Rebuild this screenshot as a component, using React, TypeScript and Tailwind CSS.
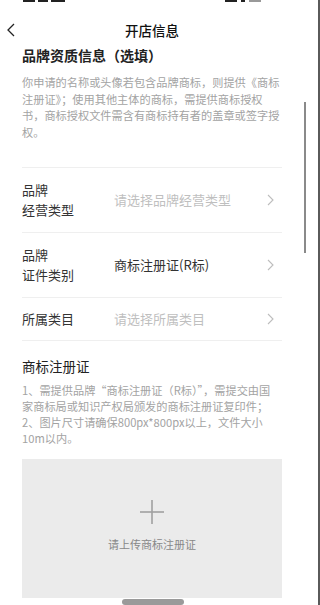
import type React from "react"

const font = { fontFamily: '"Noto Sans CJK SC", "Noto Sans", sans-serif' }

const Chevron: React.FC = () => (
    <svg width="7" height="12" viewBox="0 0 7 12" fill="none" className="shrink-0">
        <polyline points="1,1 6,6 1,11" stroke="#bdbdbd" strokeWidth="1.1" />
    </svg>
)

interface RowProps {
    label: string[]
    value: string
    placeholder?: boolean
}

const FormRow: React.FC<RowProps> = ({ label, value, placeholder }) => (
    <div className={`flex items-center border-b border-[#efefef] ${label.length > 1 ? "py-3" : "py-[11px]"}`}>
        <div className="w-[92px] text-[13px] leading-[20px] text-[#333]">
            {label.map((l) => (
                <div key={l}>{l}</div>
            ))}
        </div>
        <div className={`flex-1 text-[13px] leading-[20px] ${placeholder ? "text-[#bfbfbf]" : "text-[#333]"}`}>{value}</div>
        <div className="pr-[8px]">
            <Chevron />
        </div>
    </div>
)

export default function App() {
    return (
        <div className="flex w-[320px] h-[605px] overflow-hidden bg-white" style={font}>
            {/* Main page */}
            <div className="w-[304px] shrink-0 flex flex-col">
                {/* status bar (cut off) */}
                <div className="h-[23px] flex items-start justify-between px-[23px]">
                    <div className="flex gap-[3px]">
                        <div className="w-[12px] h-[2px] bg-[#222]"></div>
                        <div className="w-[10px] h-[2px] bg-[#222]"></div>
                        <div className="w-[14px] h-[2px] bg-[#222]"></div>
                    </div>
                    <div className="flex gap-[4px] mr-[20px]">
                        <div className="w-[12px] h-[2px] bg-[#222]"></div>
                        <div className="w-[4px] h-[2px] bg-[#222]"></div>
                        <div className="w-[12px] h-[2px] bg-[#999]"></div>
                    </div>
                </div>

                {/* header */}
                <div className="h-[24px] flex items-center">
                    <svg width="10" height="14" viewBox="0 0 10 14" fill="none" className="ml-[6px]">
                        <polyline points="8,1 2,7 8,13" stroke="#222" strokeWidth="1.3" />
                    </svg>
                    <div className="flex-1 text-center text-[13.5px] font-medium text-[#111] mr-[16px]">开店信息</div>
                </div>

                <div className="px-[22px] flex flex-col">
                    <div className="mt-[5px] text-[14px] leading-[20px] font-bold text-[#222]">品牌资质信息（选填）</div>
                    <div className="mt-[9px] text-[11.2px] leading-[16.5px] text-[#a3a3a3] whitespace-nowrap">
                        <div>你申请的名称或头像若包含品牌商标，则提供《商标</div>
                        <div>注册证》；使用其他主体的商标，需提供商标授权</div>
                        <div>书，商标授权文件需含有商标持有者的盖章或签字授</div>
                        <div>权。</div>
                    </div>

                    <div className="mt-[27px] border-t border-[#efefef]">
                        <FormRow label={["品牌", "经营类型"]} value="请选择品牌经营类型" placeholder />
                        <FormRow label={["品牌", "证件类别"]} value="商标注册证(R标)" />
                        <FormRow label={["所属类目"]} value="请选择所属类目" placeholder />
                    </div>

                    <div className="mt-[15px] text-[13.5px] leading-[20px] text-[#222]">商标注册证</div>
                    <div className="mt-[6px] text-[11.2px] leading-[16px] text-[#a3a3a3] whitespace-nowrap">
                        <div>1、需提供品牌“商标注册证（R标）”，需提交由国</div>
                        <div>家商标局或知识产权局颁发的商标注册证复印件；</div>
                        <div>2、图片尺寸请确保800px*800px以上，文件大小</div>
                        <div>10m以内。</div>
                    </div>

                    <div className="mt-[13px] h-[139px] shrink-0 bg-[#ebebeb] flex flex-col items-center justify-center">
                        <svg width="24" height="24" viewBox="0 0 24 24" fill="none" className="mt-[-4px]">
                            <line x1="12" y1="0" x2="12" y2="24" stroke="#a0a0a0" strokeWidth="1.6" />
                            <line x1="0" y1="12" x2="24" y2="12" stroke="#a0a0a0" strokeWidth="1.6" />
                        </svg>
                        <div className="mt-[12px] text-[11px] text-[#888]">请上传商标注册证</div>
                    </div>

                    <div className="mt-[1px] flex justify-center">
                        <div className="w-[62px] h-[6px] rounded-full bg-[#9a9a9a] ml-[2px]"></div>
                    </div>
                </div>
            </div>

            {/* scrollbar column */}
            <div className="flex-1 flex">
                <div className="w-[14px] flex flex-col">
                    <div className="mt-[102px] w-[2px] h-[151px] bg-[#8a8a8a]"></div>
                </div>
                <div className="w-[2px] bg-[#5a5a5a]"></div>
            </div>
        </div>
    )
}
